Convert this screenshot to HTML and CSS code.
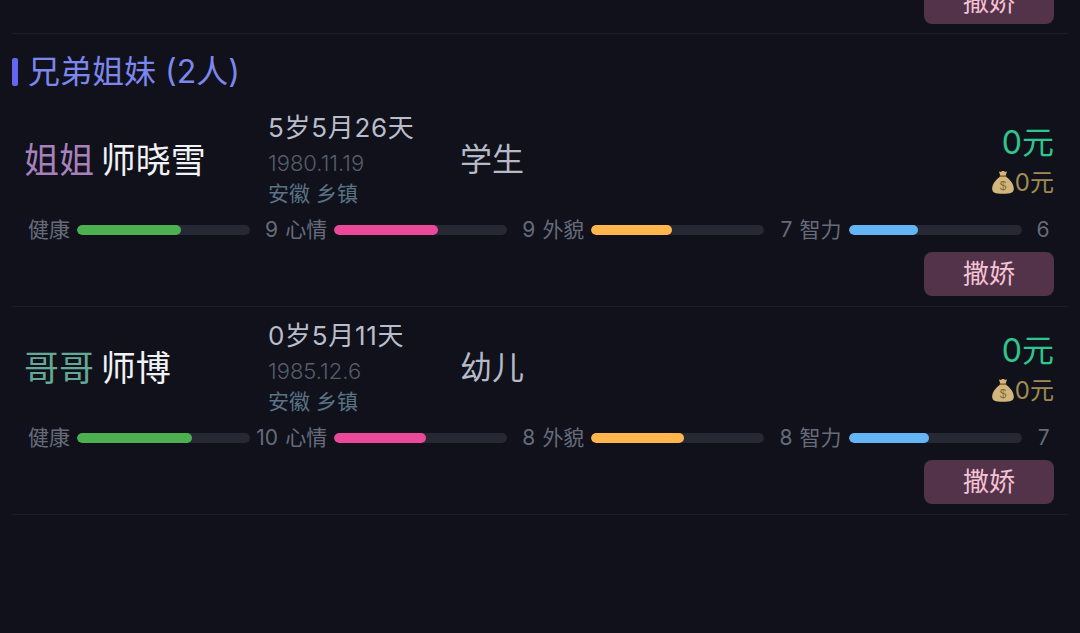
FILE: index.html
```html
<!DOCTYPE html>
<html lang="zh-CN">
<head>
  <meta charset="UTF-8" />
  <title>兄弟姐妹</title>
  <link rel="stylesheet" href="styles.css">
</head>
<body>
  <main class="page">
    <div class="row row-prev">
      <div class="row-action"><button class="btn" type="button">撒娇</button></div>
    </div>

    <h2 class="section-title">兄弟姐妹 (2人)</h2>

    <div class="row">
      <div class="info">
        <div class="name"><span class="rel rel-sister">姐姐</span> 师晓雪</div>
        <div class="meta">
          <div class="age">5岁5月26天</div>
          <div class="birth">1980.11.19</div>
          <div class="place">安徽 乡镇</div>
        </div>
        <div class="job">学生</div>
        <div class="money">
          <div class="cash">0元</div>
          <div class="savings">
            <svg class="bag" viewBox="0 0 24 24"><path fill="#d2b67c" d="M8.2 1.6c1 .7 1.9.7 2.6.2.9-.6 1.7-.6 2.500 0 .7.5 1.600.5 2.500-.2l-1.500 4.400h-4.700zM9.300 6.800h5.400c3.700 2.400 7.300 6.900 7.300 10.900 0 3.500-2.700 4.700-10 4.700s-10-1.200-10-4.700c0-4 3.600-8.500 7.300-10.900z"/><rect x="8.800" y="5.400" width="6.400" height="1.500" rx=".7" fill="#8d6f3c"/><text x="12" y="19.300" text-anchor="middle" class="bag-sign">$</text></svg>0元
          </div>
        </div>
      </div>
      <div class="stats">
        <div class="stat"><span class="stat-label">健康</span><div class="track"><div class="fill fill-health" style="width:60%"></div></div><span class="stat-value">9</span></div>
        <div class="stat"><span class="stat-label">心情</span><div class="track"><div class="fill fill-mood" style="width:60%"></div></div><span class="stat-value">9</span></div>
        <div class="stat"><span class="stat-label">外貌</span><div class="track"><div class="fill fill-looks" style="width:46.67%"></div></div><span class="stat-value">7</span></div>
        <div class="stat"><span class="stat-label">智力</span><div class="track"><div class="fill fill-iq" style="width:40%"></div></div><span class="stat-value">6</span></div>
      </div>
      <div class="row-action"><button class="btn" type="button">撒娇</button></div>
    </div>

    <div class="row">
      <div class="info">
        <div class="name"><span class="rel rel-brother">哥哥</span> 师博</div>
        <div class="meta">
          <div class="age">0岁5月11天</div>
          <div class="birth">1985.12.6</div>
          <div class="place">安徽 乡镇</div>
        </div>
        <div class="job">幼儿</div>
        <div class="money">
          <div class="cash">0元</div>
          <div class="savings">
            <svg class="bag" viewBox="0 0 24 24"><path fill="#d2b67c" d="M8.2 1.6c1 .7 1.9.7 2.6.2.9-.6 1.7-.6 2.500 0 .7.5 1.600.5 2.500-.2l-1.500 4.400h-4.700zM9.300 6.800h5.400c3.700 2.400 7.300 6.900 7.300 10.900 0 3.500-2.700 4.700-10 4.700s-10-1.200-10-4.700c0-4 3.600-8.500 7.300-10.900z"/><rect x="8.800" y="5.400" width="6.400" height="1.500" rx=".7" fill="#8d6f3c"/><text x="12" y="19.300" text-anchor="middle" class="bag-sign">$</text></svg>0元
          </div>
        </div>
      </div>
      <div class="stats">
        <div class="stat"><span class="stat-label">健康</span><div class="track"><div class="fill fill-health" style="width:66.67%"></div></div><span class="stat-value">10</span></div>
        <div class="stat"><span class="stat-label">心情</span><div class="track"><div class="fill fill-mood" style="width:53.33%"></div></div><span class="stat-value">8</span></div>
        <div class="stat"><span class="stat-label">外貌</span><div class="track"><div class="fill fill-looks" style="width:53.33%"></div></div><span class="stat-value">8</span></div>
        <div class="stat"><span class="stat-label">智力</span><div class="track"><div class="fill fill-iq" style="width:46.67%"></div></div><span class="stat-value">7</span></div>
      </div>
      <div class="row-action"><button class="btn" type="button">撒娇</button></div>
    </div>
  </main>
</body>
</html>
```

FILE: styles.css
```css
html, body {
  margin: 0;
  height: 100%;
  overflow: hidden;
  background: #10111a;
}

body {
  font-family: Inter, "Noto Sans CJK SC", sans-serif;
  font-weight: 400;
  color: #f1f2f6;
}

.page {
  margin-top: -20px;
  padding: 0 12px;
}

.section-title {
  margin: 0;
  padding: 22px 0 11px;
  height: 32px;
  display: flex;
  align-items: center;
  gap: 10px;
  font-size: 32px;
  font-weight: 400;
  line-height: 32px;
  color: #7c86ee;
}

.section-title::before {
  content: "";
  width: 6px;
  height: 28px;
  border-radius: 2px;
  background: #6366f1;
}

.row {
  padding-top: 11px;
  padding-bottom: 10px;
  border-bottom: 1px solid #1c1d27;
}

.row-prev {
  padding-top: 0;
  padding-bottom: 9px;
}

.info {
  display: flex;
  align-items: center;
  padding: 0 14px 0 12px;
}

.name {
  width: 244px;
  padding-top: 2px;
  font-size: 35px;
  line-height: 48px;
  word-spacing: -3px;
  white-space: nowrap;
}

.rel-sister {
  color: #a880bb;
}

.rel-brother {
  color: #66a896;
}

.meta {
  width: 193px;
}

.age {
  font-size: 26px;
  line-height: 36px;
  letter-spacing: .7px;
  color: #b9bdcb;
}

.birth {
  font-size: 22px;
  font-weight: 300;
  line-height: 34px;
  color: #565c6b;
}

.place {
  font-size: 21px;
  line-height: 28px;
  color: #5a7288;
}

.job {
  margin-left: -1px;
  padding-top: 2px;
  font-size: 32px;
  line-height: 48px;
  color: #b6bac8;
}

.money {
  margin-left: auto;
  padding-top: 3px;
  text-align: right;
}

.cash {
  font-size: 32px;
  line-height: 44px;
  color: #2fc58f;
}

.savings {
  display: flex;
  justify-content: flex-end;
  align-items: center;
  font-size: 24px;
  line-height: 36px;
  color: #a08b52;
}

.bag {
  width: 26px;
  height: 27px;
  margin: -2px -1px -2px 0;
}

.bag-sign {
  font-family: "Liberation Sans", sans-serif;
  font-size: 11px;
  fill: #7d6a3e;
}

.stats {
  display: grid;
  grid-template-columns: repeat(4, 249.2px);
  column-gap: 8px;
  margin-top: 6px;
  padding-left: 16px;
}

.stat {
  display: flex;
  align-items: center;
  height: 32px;
  font-size: 21px;
  color: #666b7a;
}

.stat-label {
  flex: none;
  width: 42px;
  margin-right: 7px;
  margin-bottom: 5px;
  white-space: nowrap;
}

.track {
  flex: none;
  width: 173px;
  height: 10px;
  border-radius: 5px;
  background: #262833;
  overflow: hidden;
}

.fill {
  height: 100%;
  border-radius: 5px;
}

.fill-health { background: #4caf50; }
.fill-mood { background: #ec4899; }
.fill-looks { background: #ffb74d; }
.fill-iq { background: #64b5f6; }

.stat-value {
  flex: none;
  width: 28px;
  margin-bottom: 1px;
  text-align: right;
}

.row-action {
  display: flex;
  justify-content: flex-end;
  margin-top: 6px;
  padding-right: 14px;
}

.row-prev .row-action {
  margin-top: 0;
}

.btn {
  width: 130px;
  height: 44px;
  padding: 0;
  border: none;
  border-radius: 8px;
  background: #53334a;
  color: #f6c3d4;
  font-family: inherit;
  font-size: 26px;
  font-weight: 400;
  line-height: 44px;
}
```
